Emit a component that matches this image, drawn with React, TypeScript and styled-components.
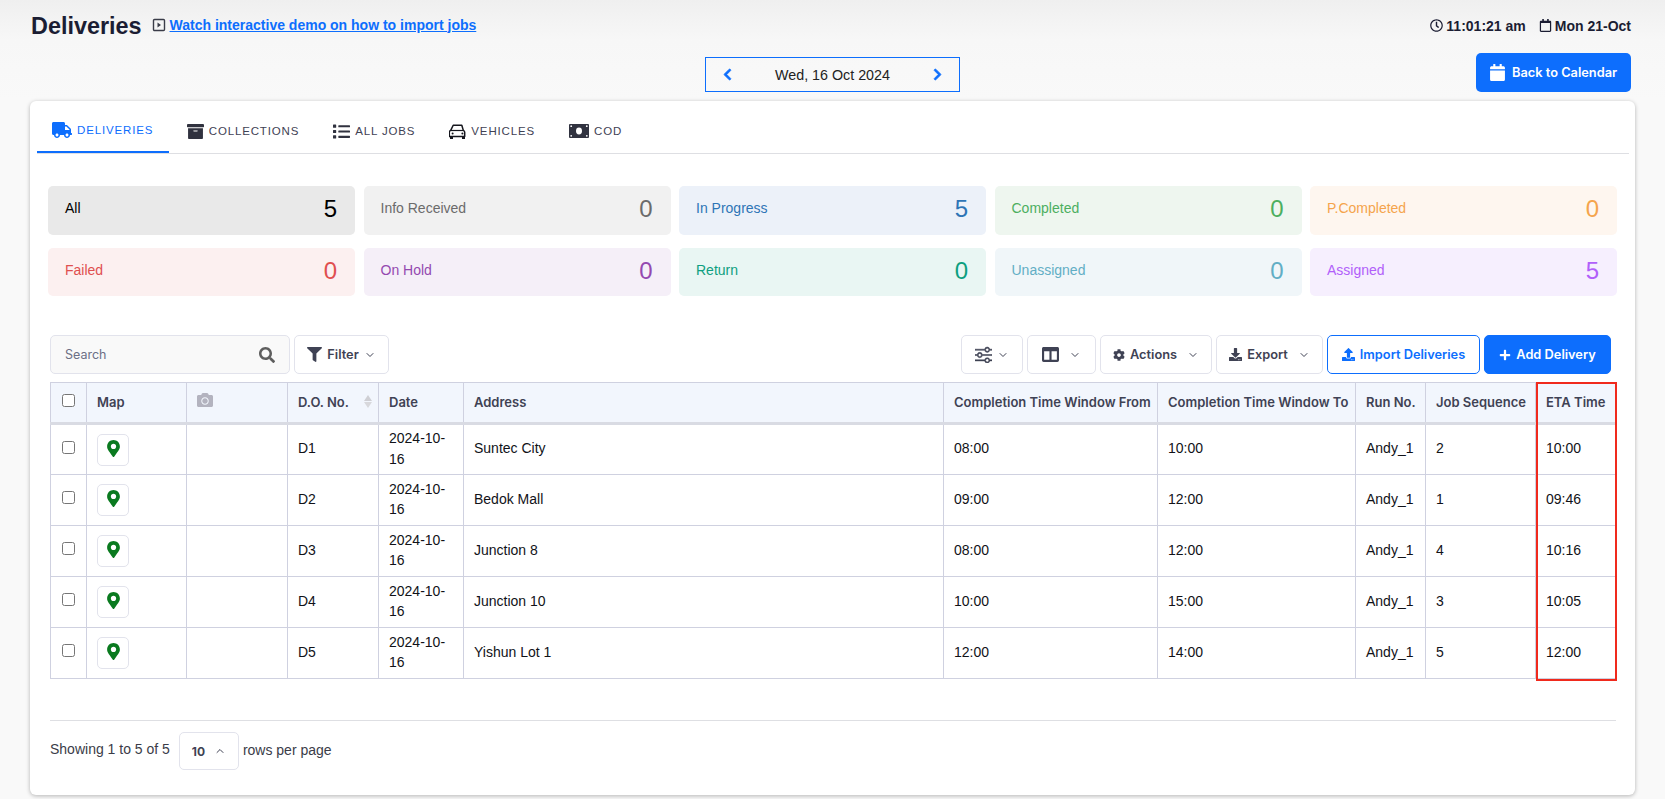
import React from "react"
import styled, { createGlobalStyle } from "styled-components"
import { ChevronDown, ChevronUp } from "lucide-react"
import { BsSliders } from "react-icons/bs"
import {
  FaArchive,
  FaCalendar,
  FaCamera,
  FaChevronLeft,
  FaChevronRight,
  FaCog,
  FaColumns,
  FaDownload,
  FaFilter,
  FaList,
  FaMapMarkerAlt,
  FaPlus,
  FaRegCalendar,
  FaRegClock,
  FaSearch,
  FaTruck,
  FaUpload,
} from "react-icons/fa"

const GlobalStyle = createGlobalStyle`
  html, body {
    margin: 0;
    padding: 0;
    background: #f9f9f9;
  }
  * {
    box-sizing: border-box;
  }
  body {
    font-family: "Liberation Sans", Arial, sans-serif;
    color: #1e2030;
  }
`

const Page = styled.div`
  height: 799px;
  overflow: hidden;
  padding: 0 30px;
  background: linear-gradient(#efefef 0, #f7f7f7 40px, #f9f9f9 100px);
`

const TopRow = styled.header`
  display: flex;
  align-items: center;
  justify-content: space-between;
  height: 52px;
  padding: 0 4px 0 1px;
`

const TitleGroup = styled.div`
  display: flex;
  align-items: center;
`

const Title = styled.h1`
  margin: 0;
  font-size: 23.4px;
  font-weight: 700;
  color: #1b1d33;
`

const DemoLink = styled.a`
  display: flex;
  align-items: center;
  gap: 4px;
  margin: -3px 0 0 10px;
  font-size: 14px;
  font-weight: 700;
  color: #0d6efd;
  text-decoration: underline;
`

const Clock = styled.div`
  display: flex;
  align-items: center;
  gap: 13px;
  margin-top: -1px;
  font-size: 14px;
  font-weight: 700;
  color: #1b1d33;
`

const ClockItem = styled.span`
  display: flex;
  align-items: center;
  gap: 3px;
`

const DateRow = styled.div`
  display: grid;
  grid-template-columns: 255px 1fr;
  height: 49px;
  padding: 1px 4px 0 675px;
`

const DatePicker = styled.div`
  display: flex;
  align-items: center;
  justify-content: space-between;
  height: 35px;
  margin-top: 4px;
  padding: 0 15px;
  border: 1px solid #0d6efd;
  font-size: 14.3px;
  color: #222;
`

const ArrowButton = styled.span`
  display: flex;
  color: #0d6efd;
  font-size: 13px;
  svg {
    stroke: currentColor;
    stroke-width: 30px;
  }
`

const BackButton = styled.button`
  justify-self: end;
  display: flex;
  align-items: center;
  gap: 6px;
  height: 39px;
  width: 155px;
  padding: 0 13px;
  border: 0;
  border-radius: 5px;
  background: #0d6efd;
  color: #fff;
  font-family: Inter, sans-serif;
  font-size: 12.8px;
  font-weight: 600;
  white-space: nowrap;
`

const Card = styled.main`
  height: 694px;
  padding: 0 6px 0 7px;
  background: #fff;
  border-radius: 6px;
  box-shadow: 0 1px 4px rgba(0, 0, 0, 0.28);
`

const Tabs = styled.nav`
  display: flex;
  height: 53px;
  border-bottom: 1px solid #dedfe3;
`

const Tab = styled.div<{ $active?: boolean }>`
  display: flex;
  align-items: center;
  gap: 5px;
  height: 52px;
  padding: ${(p) => (p.$active ? "8px 16px 0 15px" : "8px 16.5px 0 17.5px")};
  border-bottom: ${(p) => (p.$active ? "2px solid #0d6efd" : "0")};
  color: ${(p) => (p.$active ? "#0d6efd" : "#3f4254")};
  font-size: 11.5px;
  letter-spacing: 0.85px;
  text-transform: uppercase;
  svg {
    font-size: 17px;
    color: ${(p) => (p.$active ? "#0d6efd" : "#30323f")};
  }
`

const StatusGrid = styled.section`
  display: grid;
  grid-template-columns: repeat(5, 307px);
  grid-auto-rows: 48.5px;
  gap: 13px 8.5px;
  margin: 32px 0 0 11px;
`

const StatusCard = styled.div<{ $bg: string; $color: string }>`
  display: flex;
  align-items: center;
  justify-content: space-between;
  padding: 0 18px 0 17px;
  border-radius: 5px;
  background: ${(p) => p.$bg};
  color: ${(p) => p.$color};
`

const StatusLabel = styled.span`
  font-size: 14px;
  margin-top: -4px;
`

const StatusCount = styled.span`
  font-size: 24px;
  margin-top: -2px;
`

const Toolbar = styled.div`
  display: flex;
  align-items: stretch;
  justify-content: space-between;
  height: 39px;
  margin: 39px 0 8px 13px;
  padding-right: 18px;
`

const ToolGroup = styled.div`
  display: flex;
  gap: 4px;
`

const SearchBox = styled.div`
  display: flex;
  align-items: center;
  justify-content: space-between;
  width: 240px;
  padding: 0 14px;
  border: 1px solid #e2e3ec;
  border-radius: 5px;
  background: #f9f9f9;
  color: #6c6f85;
  font-size: 12.5px;
  font-family: Inter, sans-serif;
  svg {
    color: #5e5e5e;
    font-size: 16px;
  }
`

const ToolButton = styled.button<{ $width: number; $variant?: "outline" | "solid" }>`
  display: flex;
  align-items: center;
  justify-content: center;
  gap: 5px;
  width: ${(p) => p.$width}px;
  padding: 0;
  border: 1px solid ${(p) => (p.$variant ? "#0d6efd" : "#e2e3ec")};
  border-radius: 5px;
  background: ${(p) => (p.$variant === "solid" ? "#0d6efd" : "#fff")};
  color: ${(p) =>
    p.$variant === "solid" ? "#fff" : p.$variant === "outline" ? "#0d6efd" : "#3f4254"};
  font-family: Inter, sans-serif;
  font-size: 12.8px;
  font-weight: 600;
`

const DropChevron = styled(ChevronDown)`
  margin-left: 5px;
`

const TableWrap = styled.div`
  position: relative;
  width: 1566px;
  margin-left: 13px;
`

const Table = styled.table`
  width: 100%;
  table-layout: fixed;
  border-collapse: collapse;
  font-size: 14px;
  color: #111218;
`

const HeadCell = styled.th`
  height: 41px;
  padding: 0 10px 2px;
  border: 1px solid #cfd1e0;
  border-bottom: 3px solid #d9dbe3;
  background: #f2f6fd;
  color: #3f4254;
  font-family: Inter, sans-serif;
  font-size: 13px;
  font-weight: 600;
  text-align: left;
  white-space: nowrap;
`

const HeadInner = styled.div`
  display: flex;
  align-items: center;
  justify-content: space-between;
`

const SortArrows = styled.span`
  display: flex;
  flex-direction: column;
  gap: 1px;
  margin-right: -4px;
  &::before,
  &::after {
    content: "";
    border-left: 4px solid transparent;
    border-right: 4px solid transparent;
  }
  &::before {
    border-bottom: 6px solid #cfcfd4;
  }
  &::after {
    border-top: 6px solid #d8d8dc;
  }
`

const Cell = styled.td`
  height: 51px;
  padding: 0 10px 2px;
  border: 1px solid #cfd1e0;
  line-height: 20.5px;
`

const CheckCell = styled.div`
  display: flex;
  justify-content: center;
  margin-top: -3px;
`

const Check = styled.input`
  width: 13px;
  height: 13px;
  margin: 0;
`

const MapButton = styled.span`
  display: flex;
  align-items: center;
  justify-content: center;
  width: 32px;
  height: 32px;
  margin-top: 2px;
  border: 1px solid #e2e3ec;
  border-radius: 5px;
  color: #0a7a1f;
  font-size: 17px;
  svg {
    margin-top: -3px;
  }
`

const Highlight = styled.div`
  position: absolute;
  top: 0;
  left: 1486px;
  right: -1px;
  bottom: -2px;
  border: 2px solid #f02a1d;
  pointer-events: none;
`

const Footer = styled.footer`
  display: flex;
  align-items: center;
  gap: 9px;
  width: 1566px;
  height: 61px;
  margin: 41px 0 0 13px;
  border-top: 1px solid #dedfe3;
  color: #3a3c48;
  font-size: 14px;
`

const FooterText = styled.span<{ $after?: boolean }>`
  margin: ${(p) => (p.$after ? "-2px 0 0 -5px" : "-4px 0 0")};
`

const PageSize = styled.div`
  display: flex;
  align-items: center;
  justify-content: center;
  gap: 9px;
  width: 60px;
  height: 38px;
  border: 1px solid #e2e3ec;
  border-radius: 5px;
  color: #3f4254;
  font-family: Inter, sans-serif;
  font-size: 12px;
  font-weight: 700;
`

const statuses = [
  { label: "All", count: 5, bg: "#e9e9e9", color: "#000" },
  { label: "Info Received", count: 0, bg: "#f1f1f1", color: "#6b6b6b" },
  { label: "In Progress", count: 5, bg: "#ecf1f9", color: "#2e75b6" },
  { label: "Completed", count: 0, bg: "#eef6ef", color: "#4caf5f" },
  { label: "P.Completed", count: 0, bg: "#fef6ef", color: "#f5a44c" },
  { label: "Failed", count: 0, bg: "#fcf0f0", color: "#e04f4f" },
  { label: "On Hold", count: 0, bg: "#f5eff8", color: "#9449b0" },
  { label: "Return", count: 0, bg: "#e9f6f3", color: "#0e9f80" },
  { label: "Unassigned", count: 0, bg: "#f0f6f9", color: "#62aec5" },
  { label: "Assigned", count: 5, bg: "#f6effe", color: "#b160fa" },
]

const columnWidths = [36, 100, 101, 91, 85, 480, 214, 198, 70, 110, 81]

const rows = [
  ["D1", "Suntec City", "08:00", "10:00", "2", "10:00"],
  ["D2", "Bedok Mall", "09:00", "12:00", "1", "09:46"],
  ["D3", "Junction 8", "08:00", "12:00", "4", "10:16"],
  ["D4", "Junction 10", "10:00", "15:00", "3", "10:05"],
  ["D5", "Yishun Lot 1", "12:00", "14:00", "5", "12:00"],
]

const PlayBox = () => (
  <svg width="14" height="14" viewBox="0 0 14 14" aria-hidden="true">
    <rect x="1.5" y="1.5" width="11" height="11" rx="1" fill="none" stroke="#3a3c48" strokeWidth="1.4" />
    <path d="M5.5 4.5 9 7l-3.5 2.5z" fill="#3a3c48" />
  </svg>
)

const CarFront = () => (
  <svg width="17" height="17" viewBox="0 0 17 17" aria-hidden="true">
    <path
      d="M4.2 2.2h8.6l1.5 5.2c.8.3 1.4 1 1.4 1.9v4.2H.3V9.3c0-.9.6-1.6 1.4-1.9z"
      fill="none"
      stroke="#14151c"
      strokeWidth="1.5"
      strokeLinejoin="round"
    />
    <path d="M2 7.5h13" stroke="#14151c" strokeWidth="1.2" />
    <path d="M1 13.5h3v2.4H1zM13 13.5h3v2.4h-3z" fill="#14151c" />
    <circle cx="3.6" cy="10.4" r="1" fill="#14151c" />
    <circle cx="13.4" cy="10.4" r="1" fill="#14151c" />
  </svg>
)

const CashNote = () => (
  <svg width="20" height="14" viewBox="0 0 20 14" aria-hidden="true">
    <rect width="20" height="14" rx="1" fill="#30323f" />
    <ellipse cx="10" cy="7" rx="3" ry="3.4" fill="#fff" />
    <circle cx="2.2" cy="2.2" r="0.9" fill="#fff" />
    <circle cx="17.8" cy="2.2" r="0.9" fill="#fff" />
    <circle cx="2.2" cy="11.8" r="0.9" fill="#fff" />
    <circle cx="17.8" cy="11.8" r="0.9" fill="#fff" />
  </svg>
)

const App: React.FC = () => {
  return (
    <Page>
      <GlobalStyle />
      <TopRow>
        <TitleGroup>
          <Title>Deliveries</Title>
          <DemoLink href="#">
            <PlayBox />
            Watch interactive demo on how to import jobs
          </DemoLink>
        </TitleGroup>
        <Clock>
          <ClockItem>
            <FaRegClock size={13} />
            11:01:21 am
          </ClockItem>
          <ClockItem>
            <FaRegCalendar size={13} />
            Mon 21-Oct
          </ClockItem>
        </Clock>
      </TopRow>
      <DateRow>
        <DatePicker>
          <ArrowButton>
            <FaChevronLeft />
          </ArrowButton>
          Wed, 16 Oct 2024
          <ArrowButton>
            <FaChevronRight />
          </ArrowButton>
        </DatePicker>
        <BackButton>
          <FaCalendar size={17} />
          Back to Calendar
        </BackButton>
      </DateRow>
      <Card>
        <Tabs>
          <Tab $active>
            <FaTruck size={20} />
            Deliveries
          </Tab>
          <Tab>
            <FaArchive />
            Collections
          </Tab>
          <Tab>
            <FaList />
            All Jobs
          </Tab>
          <Tab>
            <CarFront />
            Vehicles
          </Tab>
          <Tab>
            <CashNote />
            COD
          </Tab>
        </Tabs>
        <StatusGrid>
          {statuses.map((s) => (
            <StatusCard key={s.label} $bg={s.bg} $color={s.color}>
              <StatusLabel>{s.label}</StatusLabel>
              <StatusCount>{s.count}</StatusCount>
            </StatusCard>
          ))}
        </StatusGrid>
        <Toolbar>
          <ToolGroup>
            <SearchBox>
              Search
              <FaSearch />
            </SearchBox>
            <ToolButton $width={95}>
              <FaFilter size={15} />
              Filter
              <ChevronDown size={12} />
            </ToolButton>
          </ToolGroup>
          <ToolGroup>
            <ToolButton $width={62}>
              <BsSliders size={17} strokeWidth={0.5} />
              <ChevronDown size={12} />
            </ToolButton>
            <ToolButton $width={69}>
              <FaColumns size={17} />
              <DropChevron size={12} />
            </ToolButton>
            <ToolButton $width={112}>
              <FaCog size={12} />
              Actions
              <DropChevron size={12} />
            </ToolButton>
            <ToolButton $width={107}>
              <FaDownload size={13} />
              Export
              <DropChevron size={12} />
            </ToolButton>
            <ToolButton $width={153} $variant="outline">
              <FaUpload size={13} />
              Import Deliveries
            </ToolButton>
            <ToolButton $width={127} $variant="solid">
              <FaPlus size={12} />
              Add Delivery
            </ToolButton>
          </ToolGroup>
        </Toolbar>
        <TableWrap>
          <Table>
            <colgroup>
              {columnWidths.map((w, i) => (
                <col key={i} width={w} />
              ))}
            </colgroup>
            <thead>
              <tr>
                <HeadCell>
                  <CheckCell>
                    <Check type="checkbox" readOnly />
                  </CheckCell>
                </HeadCell>
                <HeadCell>Map</HeadCell>
                <HeadCell>
                  <FaCamera size={16} color="#b3b3bf" />
                </HeadCell>
                <HeadCell>
                  <HeadInner>
                    D.O. No.
                    <SortArrows />
                  </HeadInner>
                </HeadCell>
                <HeadCell>Date</HeadCell>
                <HeadCell>Address</HeadCell>
                <HeadCell>Completion Time Window From</HeadCell>
                <HeadCell>Completion Time Window To</HeadCell>
                <HeadCell>Run No.</HeadCell>
                <HeadCell>Job Sequence</HeadCell>
                <HeadCell>ETA Time</HeadCell>
              </tr>
            </thead>
            <tbody>
              {rows.map(([no, address, from, to, seq, eta]) => (
                <tr key={no}>
                  <Cell>
                    <CheckCell>
                      <Check type="checkbox" readOnly />
                    </CheckCell>
                  </Cell>
                  <Cell>
                    <MapButton>
                      <FaMapMarkerAlt />
                    </MapButton>
                  </Cell>
                  <Cell />
                  <Cell>{no}</Cell>
                  <Cell>2024-10-16</Cell>
                  <Cell>{address}</Cell>
                  <Cell>{from}</Cell>
                  <Cell>{to}</Cell>
                  <Cell>Andy_1</Cell>
                  <Cell>{seq}</Cell>
                  <Cell>{eta}</Cell>
                </tr>
              ))}
            </tbody>
          </Table>
          <Highlight />
        </TableWrap>
        <Footer>
          <FooterText>Showing 1 to 5 of 5</FooterText>
          <PageSize>
            10
            <ChevronUp size={12} />
          </PageSize>
          <FooterText $after>rows per page</FooterText>
        </Footer>
      </Card>
    </Page>
  )
}

export default App
